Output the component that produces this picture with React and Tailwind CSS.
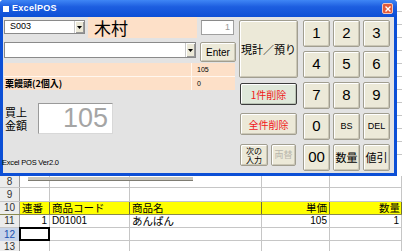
import React from "react";

const F = { fontFamily: '"Liberation Sans", "Noto Sans CJK JP", sans-serif' };
const J = { fontFamily: '"Noto Sans CJK JP", "Liberation Sans", sans-serif' };

const btn =
  "bg-[#ece9d8] border border-[#a19e90] rounded-[2px] shadow-[inset_1px_1px_0_#ffffff,inset_-1px_-1px_0_#cbc7b6] flex items-center justify-center text-black";

function DropArrow() {
  return (
    <div className="w-[10px] h-full bg-[#ece9d8] border-l border-[#c8c8c8] flex items-center justify-center shadow-[inset_1px_1px_0_#fff,inset_-1px_-1px_0_#999]">
      <svg width="5" height="3" viewBox="0 0 5 3">
        <path d="M0 0h5L2.5 3z" fill="#000" />
      </svg>
    </div>
  );
}

function Cell({ children, cls = "" }) {
  return (
    <div className={`h-full border-r border-[#c6c6c6] whitespace-nowrap flex items-center leading-none ${cls}`}>
      {children}
    </div>
  );
}

function Row({ num, h, sel, yellow, cells }) {
  return (
    <div
      className={`grid grid-cols-[20px_30px_80px_132px_68px_72px] border-b ${yellow ? "border-[#8a8a50]" : "border-[#c6c6c6]"} ${h}`}
      style={J}
    >
      <div
        className={`h-full border-r border-[#9a9a9a] flex items-center justify-center text-[10px] leading-none ${sel ? "bg-[#c7d4ea] text-[#2050b0]" : "bg-[#ececec] text-[#333]"}`}
        style={F}
      >
        {num}
      </div>
      {cells}
    </div>
  );
}

export default function App() {
  return (
    <div className="w-[402px] h-[251px] overflow-hidden bg-white relative" style={J}>
      <div className="flex">
        {/* Window */}
        <div className="w-[397px] h-[176px] bg-[#0c4fd6] flex flex-col rounded-t-[4px]">
          {/* Title bar */}
          <div className="h-[17px] flex items-center bg-[linear-gradient(#3f86f5,#1d5ee0_40%,#0c4fd6)] rounded-t-[4px]">
            <div className="ml-[3px] w-[6px] h-[6px] bg-white" />
            <div className="ml-[3px] text-white text-[9px] font-bold tracking-[0.3px]" style={F}>
              ExcelPOS
            </div>
            <div className="ml-auto mr-[4px] w-[11px] h-[11px] rounded-[2px] bg-[#e25b3b] border border-[#f3c6b8] flex items-center justify-center">
              <svg width="6" height="6" viewBox="0 0 6 6">
                <path d="M0.5 0.5L5.5 5.5M5.5 0.5L0.5 5.5" stroke="#fff" strokeWidth="1.4" />
              </svg>
            </div>
          </div>
          {/* Client */}
          <div className="mx-[3px] h-[156px] bg-[#e3e3e3] flex">
            {/* Left panel */}
            <div className="w-[236px] pl-[1px] flex flex-col">
              <div className="h-[21px] flex items-start">
                <div className="mt-[3px] w-[81px] h-[14px] bg-white border border-[#8a8a8a] flex items-center">
                  <div className="flex-1 pl-[5px] text-[9px] text-black" style={F}>S003</div>
                  <DropArrow />
                </div>
                <div className="ml-[3px] w-[109px] h-[21px] bg-[#fde0c8] flex items-center pl-[6px] text-[17px] leading-none text-black">
                  木村
                </div>
                <div className="ml-[4px] mt-[3px] w-[33px] h-[15px] bg-white border border-[#a0a0a0] border-t-[#8a8a8a] flex items-center justify-end pr-[3px] text-[9px] text-[#999]" style={F}>
                  1
                </div>
              </div>
              <div className="h-[25px] flex items-start">
                <div className="mt-[4px] w-[192px] h-[16px] bg-white border border-[#8a8a8a] flex items-center justify-end">
                  <DropArrow />
                </div>
                <div className={`ml-[4px] mt-[4px] w-[36px] h-[20px] text-[10px] ${btn}`} style={F}>
                  Enter
                </div>
              </div>
              <div className="w-[231px] grid grid-cols-[187px_43px] grid-rows-[13px_13px] gap-px bg-[#fff7ef]">
                <div className="bg-[#fde0c8]" />
                <div className="bg-[#fde0c8] text-[7px] leading-none pl-[5px] flex items-center" style={F}>105</div>
                <div className="bg-[#fde0c8] text-[9px] font-bold pl-[1px] flex items-center leading-none">栗饅頭(2個入)</div>
                <div className="bg-[#fde0c8] text-[7px] leading-none pl-[5px] flex items-center" style={F}>0</div>
              </div>
              <div className="mt-[13px] flex items-center">
                <div className="ml-[1px] w-[28px] text-[11px] text-black flex flex-col gap-[1px]">
                  <span className="h-[12px] leading-[12px]">買上</span>
                  <span className="h-[12px] leading-[12px]">金額</span>
                </div>
                <div className="ml-[5px] w-[75px] h-[31px] bg-white border border-[#d8d8d8] border-t-[#9a9a9a] border-l-[#9a9a9a] flex items-center justify-end pr-[4px] text-[27px] leading-none text-[#a5a5a5]" style={F}>
                  105
                </div>
              </div>
              <div className="mt-[24px] -ml-[2px] text-[7.5px] leading-[10px] text-black tracking-[-0.2px]" style={F}>
                Excel POS Ver2.0
              </div>
            </div>
            {/* Right panel */}
            <div className="mt-[3px] grid grid-cols-[61px_27px_27px_27px] grid-rows-[27px_27px_27px_27px_27px] gap-x-[3px] gap-y-[4px]">
              <div className={`row-span-2 w-[59px] h-full text-[11px] ${btn}`}>現計／預り</div>
              <div className={`text-[15px] ${btn}`} style={F}>1</div>
              <div className={`text-[15px] ${btn}`} style={F}>2</div>
              <div className={`text-[15px] ${btn}`} style={F}>3</div>
              <div className={`text-[15px] ${btn}`} style={F}>4</div>
              <div className={`text-[15px] ${btn}`} style={F}>5</div>
              <div className={`text-[15px] ${btn}`} style={F}>6</div>

              <div className="pt-[1px] pl-[1px]">
                <div className="w-[57px] h-[22px] border border-[#3c3c3c] rounded-[2px] bg-[#dfe8da] shadow-[inset_1px_1px_0_#ffffff,inset_-1px_-1px_0_#b9c2b4] flex items-center justify-center text-[10px] text-[#f01818]">
                  1件削除
                </div>
              </div>
              <div className={`text-[15px] ${btn}`} style={F}>7</div>
              <div className={`text-[15px] ${btn}`} style={F}>8</div>
              <div className={`text-[15px] ${btn}`} style={F}>9</div>

              <div className="pl-[1px]">
                <div className={`w-[57px] h-[22px] text-[10px] !text-[#f01818] ${btn}`}>全件削除</div>
              </div>
              <div className={`text-[15px] ${btn}`} style={F}>0</div>
              <div className={`text-[9px] ${btn}`} style={F}>BS</div>
              <div className={`text-[9px] ${btn}`} style={F}>DEL</div>

              <div className="pl-[1px] flex items-start gap-[3px]">
                <div className={`w-[28px] h-[22px] text-[8px] flex-col ${btn}`}>
                  <span className="h-[9px] leading-[9px]">次の</span>
                  <span className="h-[9px] leading-[9px]">入力</span>
                </div>
                <div className={`w-[25px] h-[22px] text-[9px] !text-[#b8b6ac] ${btn}`}>両替</div>
              </div>
              <div className={`text-[15px] ${btn}`} style={F}>00</div>
              <div className={`text-[11px] ${btn}`}>数量</div>
              <div className={`text-[11px] ${btn}`}>値引</div>
            </div>
          </div>
        </div>
        {/* Sheet visible at right of window */}
        <div className="flex-1 flex flex-col">
          <div className="h-[12px] border-b border-[#c6c6c6]" />
          <div className="h-[13px] border-b border-[#c6c6c6]" />
          <div className="h-[13px] border-b border-[#c6c6c6]" />
          <div className="h-[13px] border-b border-[#c6c6c6]" />
          <div className="h-[13px] border-b border-[#c6c6c6]" />
          <div className="h-[13px] border-b border-[#c6c6c6]" />
          <div className="h-[13px] border-b border-[#c6c6c6]" />
          <div className="h-[13px] border-b border-[#c6c6c6]" />
          <div className="h-[13px] border-b border-[#c6c6c6]" />
          <div className="h-[13px] border-b border-[#c6c6c6]" />
          <div className="h-[13px] border-b border-[#c6c6c6]" />
          <div className="h-[13px] border-b border-[#c6c6c6]" />
        </div>
      </div>

      {/* Spreadsheet */}
      <div className="relative">
        <Row
          num="8"
          h="h-[12px]"
          cells={[<Cell key="a" />, <Cell key="b" />, <Cell key="c" />, <Cell key="d" />, <Cell key="e" />]}
        />
        <div className="absolute left-[28px] top-[1px] w-[165px] h-[4px] bg-[#c9c7bd] border-b border-[#7e7c72]" />
      </div>
      <Row
        num="9"
        h="h-[14px]"
        cells={[<Cell key="a" />, <Cell key="b" />, <Cell key="c" />, <Cell key="d" />, <Cell key="e" />]}
      />
      <Row
        num="10"
        h="h-[13px]"
        yellow
        cells={[
          <Cell key="a" cls="bg-[#ffff00] !border-[#6e6e3a] text-[10.5px] pl-[2px]">連番</Cell>,
          <Cell key="b" cls="bg-[#ffff00] !border-[#6e6e3a] text-[10.5px] pl-[2px]">商品コード</Cell>,
          <Cell key="c" cls="bg-[#ffff00] !border-[#6e6e3a] text-[10.5px] pl-[2px]">商品名</Cell>,
          <Cell key="d" cls="bg-[#ffff00] !border-[#6e6e3a] text-[10.5px] justify-end pr-[2px]">単価</Cell>,
          <Cell key="e" cls="bg-[#ffff00] !border-[#6e6e3a] text-[10.5px] justify-end pr-[1px]">数量</Cell>,
        ]}
      />
      <Row
        num="11"
        h="h-[13px]"
        cells={[
          <Cell key="a" cls="text-[10px] justify-end pr-[2px]"><span style={F}>1</span></Cell>,
          <Cell key="b" cls="text-[10px] pl-[2px]"><span style={F}>D01001</span></Cell>,
          <Cell key="c" cls="text-[10.5px] pl-[2px]">あんぱん</Cell>,
          <Cell key="d" cls="text-[10px] justify-end pr-[2px]"><span style={F}>105</span></Cell>,
          <Cell key="e" cls="text-[10px] justify-end pr-[2px]"><span style={F}>1</span></Cell>,
        ]}
      />
      <Row
        num="12"
        h="h-[13px]"
        sel
        cells={[
          <div key="a" className="h-[14px] -mt-[1px] -ml-[1px] border-2 border-black bg-white" />,
          <Cell key="b" />,
          <Cell key="c" />,
          <Cell key="d" />,
          <Cell key="e" />,
        ]}
      />
      <Row
        num="13"
        h="h-[13px]"
        cells={[<Cell key="a" />, <Cell key="b" />, <Cell key="c" />, <Cell key="d" />, <Cell key="e" />]}
      />
    </div>
  );
}
